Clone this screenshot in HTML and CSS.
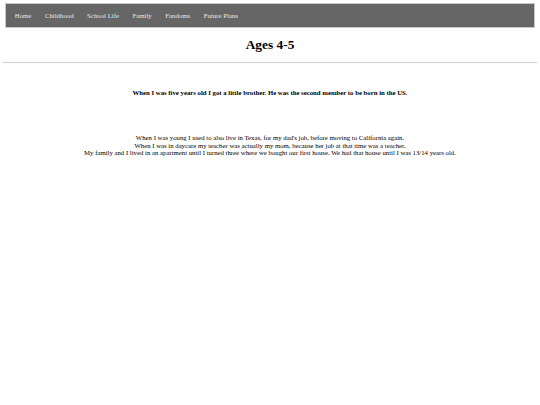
FILE: index.html
```html
<!DOCTYPE html>
<html>
<head>
<meta charset="utf-8">
<link rel="stylesheet" href="styles.css">
</head>
<body>
<nav class="topnav">
  <a href="#">Home</a>
  <a href="#">Childhood</a>
  <a href="#">School Life</a>
  <a href="#">Family</a>
  <a href="#">Fandoms</a>
  <a href="#">Future Plans</a>
</nav>
<h1 class="title">Ages 4-5</h1>
<hr class="rule">
<p class="lead">When I was five years old I got a little brother. He was the second member to be born in the US.</p>
<p class="story">When I was young I used to also live in Texas, for my dad's job, before moving to California again.<br>When I was in daycare my teacher was actually my mom, because her job at that time was a teacher.<br>My family and I lived in an apartment until I turned three where we bought our first house. We had that house until I was 13/14 years old.</p>
</body>
</html>
```
FILE: styles.css
```css
html, body {
  margin: 0;
  padding: 0;
  background: #fff;
}
body {
  padding: 3px 3px;
  font-family: "Liberation Serif", "Times New Roman", serif;
  color: #000;
}
.topnav {
  margin: 0 2px;
  height: 23px;
  background: #666;
  border: 1px solid #c8c8c8;
  display: flex;
  align-items: center;
  padding-left: 2px;
}
.topnav a {
  color: #e6e6e6;
  text-decoration: none;
  font-size: 6.8px;
  padding: 0 6.75px;
}
.title {
  text-align: center;
  font-size: 13.4px;
  font-weight: bold;
  margin: 8px 0 0;
  line-height: 17px;
}
.rule {
  border: none;
  border-top: 1px solid #d0d0d0;
  margin: 9px 0 0;
  height: 0;
}
.lead {
  text-align: center;
  font-size: 6.75px;
  font-weight: bold;
  margin: 26px 0 0;
}
.story {
  text-align: center;
  font-size: 6.75px;
  margin: 38px 0 0;
  line-height: 7.6px;
}
```
